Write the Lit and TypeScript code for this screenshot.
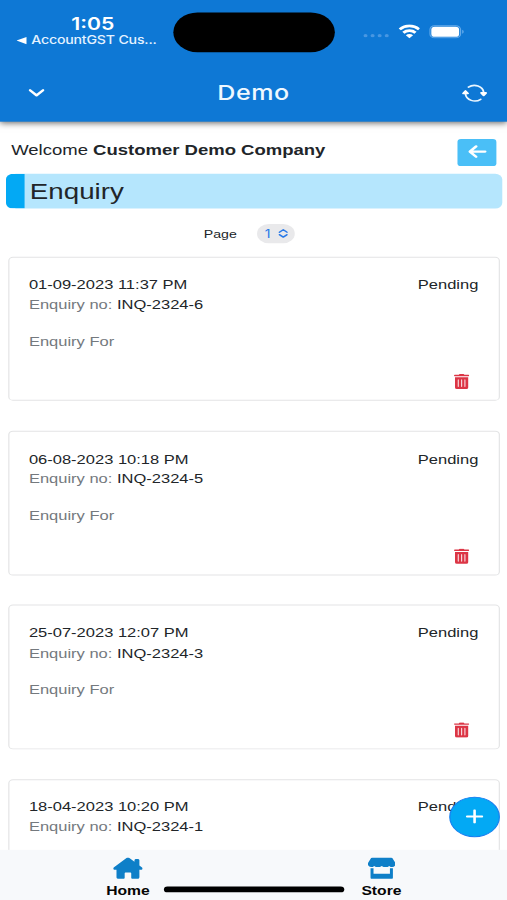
import { LitElement, html, css } from "lit";
import { customElement, property } from "lit/decorators.js";

interface Enquiry {
  date: string;
  no: string;
  status: string;
}

const ENQUIRIES: Enquiry[] = [
  { date: "01-09-2023 11:37 PM", no: "INQ-2324-6", status: "Pending" },
  { date: "06-08-2023 10:18 PM", no: "INQ-2324-5", status: "Pending" },
  { date: "25-07-2023 12:07 PM", no: "INQ-2324-3", status: "Pending" },
  { date: "18-04-2023 10:20 PM", no: "INQ-2324-1", status: "Pending" },
];

@customElement("enquiry-card")
export class EnquiryCard extends LitElement {
  @property({ attribute: false }) item!: Enquiry;

  static styles = css`
    :host {
      display: block;
      box-sizing: border-box;
      height: 149.3px;
      border: 1.3px solid #e3e4e5;
      border-radius: 4px;
      background: #fff;
      padding: 17.4px 17.3px 0 17px;
      font-size: 14px;
      line-height: 20.7px;
      color: #212529;
    }
    .row {
      display: flex;
      justify-content: space-between;
    }
    .muted {
      color: #74797e;
    }
    .for {
      margin-top: 17.4px;
    }
    .actions {
      display: flex;
      justify-content: flex-end;
      padding: 23.5px 7.4px 0 0;
    }
    .trash {
      width: 13px;
      height: 16px;
      display: block;
    }
  `;

  render() {
    return html`
      <div class="row"><span>${this.item.date}</span><span>${this.item.status}</span></div>
      <div><span class="muted">Enquiry no:</span> ${this.item.no}</div>
      <div class="muted for">Enquiry For</div>
      <div class="actions">
        <svg class="trash" viewBox="0 0 13 16" preserveAspectRatio="none">
          <path fill="#dc3545" d="M.9 3.600h11.200v10.600q0 1.600-1.600 1.600h-8Q.9 15.800.9 14.200zM.6 1.100h3.500L4.800.2h3.400l.7.900h3.500q.5 0 .5.500v.5q0 .4-.5.400H.6q-.5 0-.5-.4v-.5q0-.5.5-.5z" />
          <path stroke="#f8d5d9" stroke-width="1" stroke-linecap="round" d="M3.700 6.200v7M6.500 6.200v7M9.300 6.200v7" />
        </svg>
      </div>
    `;
  }
}

@customElement("app-root")
export class AppRoot extends LitElement {
  static styles = css`
    :host {
      display: block;
      width: 507px;
      height: 900px;
      overflow: hidden;
      background: #fff;
    }
    .device {
      position: relative;
      width: 430px;
      height: 932px;
      overflow: hidden;
      transform: scale(1.17907, 0.96567);
      transform-origin: 0 0;
      font-family: "Liberation Sans", Arial, sans-serif;
      color: #212529;
      background: #fff;
    }
    .header {
      position: relative;
      box-sizing: border-box;
      height: 126.3px;
      background: #0e78d5;
      box-shadow: 0 1px 6px rgba(0, 0, 0, 0.6);
      color: #fff;
      font-family: Inter, sans-serif;
    }
    .status {
      display: flex;
      justify-content: space-between;
      height: 66px;
      padding: 0 36px 0 14px;
    }
    .clock {
      display: flex;
      flex-direction: column;
      width: 130px;
      padding-top: 14.3px;
    }
    .time {
      font-size: 18px;
      font-weight: 600;
      line-height: 22px;
      padding-left: 46.5px;
    }
    .back {
      display: flex;
      align-items: center;
      gap: 4px;
      font-size: 12px;
      font-weight: 500;
      line-height: 12px;
      letter-spacing: -0.17px;
      white-space: nowrap;
      color: #e4f2ff;
    }
    .back svg {
      width: 8.5px;
      height: 8px;
    }
    .island {
      position: absolute;
      left: 147px;
      top: 13.3px;
      width: 137px;
      height: 40.5px;
      border-radius: 20.5px;
      background: #000;
    }
    .signals {
      display: flex;
      align-items: flex-start;
      padding-top: 25px;
    }
    .dots {
      width: 22px;
      height: 4px;
      margin: 10.3px 7.3px 0 0;
    }
    .wifi {
      width: 18.5px;
      height: 14.5px;
      margin-right: 8px;
    }
    .battery {
      width: 30px;
      height: 14px;
      margin-top: 0.9px;
    }
    .nav {
      display: grid;
      grid-template-columns: 1fr auto 1fr;
      align-items: center;
      height: 61px;
      padding: 0 17px 0 24.3px;
    }
    .title {
      font-size: 21.3px;
      font-weight: 500;
      letter-spacing: 0.4px;
      color: #eff8ff;
      margin-left: -7.3px;
      margin-top: -1px;
    }
    .chev {
      width: 14px;
      height: 9px;
    }
    .sync {
      width: 21px;
      height: 19px;
      justify-self: end;
    }
    .welcome {
      display: flex;
      justify-content: space-between;
      align-items: flex-start;
      padding: 17.4px 9px 0 9.5px;
      height: 36.7px;
      font-size: 15.7px;
    }
    .welcome-text {
      line-height: 22px;
      padding-top: 0.6px;
      white-space: nowrap;
    }
    .back-btn {
      display: flex;
      align-items: center;
      justify-content: center;
      width: 33px;
      height: 28px;
      border-radius: 3px;
      background: #4abff7;
    }
    .back-btn svg {
      width: 16px;
      height: 14px;
      margin-top: -1.5px;
    }
    .heading {
      display: flex;
      align-items: center;
      box-sizing: border-box;
      height: 36px;
      margin: 0 4.5px 0 5px;
      border-left: 16.6px solid #03a9f4;
      border-radius: 6px;
      background: #b5e6fd;
      padding: 1px 0 0 4.3px;
      font-size: 23.5px;
      line-height: 35px;
    }
    .pager {
      display: flex;
      align-items: center;
      justify-content: center;
      gap: 17.3px;
      height: 49.7px;
      padding-right: 7px;
      padding-top: 1px;
      box-sizing: border-box;
      font-size: 12px;
    }
    .select {
      display: flex;
      align-items: center;
      box-sizing: border-box;
      width: 32px;
      height: 20px;
      border-radius: 10px;
      background: #e9e9eb;
      color: #2879e8;
      font-family: Inter, sans-serif;
      font-size: 12px;
      padding-left: 6.3px;
      gap: 6.5px;
    }
    .select svg {
      width: 8.5px;
      height: 9.5px;
      margin-top: 1px;
    }
    .list {
      display: flex;
      flex-direction: column;
      gap: 30.9px;
      padding: 0 6px 0 6.5px;
    }
    .fab {
      position: absolute;
      left: 380.7px;
      top: 824.7px;
      box-sizing: border-box;
      width: 43.8px;
      height: 42.3px;
      border: 1.5px solid #187ff0;
      border-radius: 50%;
      background: #03a9f4;
      display: flex;
      align-items: center;
      justify-content: center;
    }
    .fab svg {
      width: 15px;
      height: 15px;
      margin-top: -1.5px;
    }
    .tabs {
      position: absolute;
      left: 0;
      right: 0;
      bottom: 0;
      height: 52px;
      display: grid;
      grid-template-columns: 1fr 1fr;
      background: #f7f9fb;
    }
    .tab {
      display: flex;
      flex-direction: column;
      align-items: center;
      padding: 7.7px 0 0 2px;
      font-size: 13.3px;
      font-weight: 700;
      line-height: 16px;
      color: #050505;
    }
    .tab svg {
      width: 25px;
      height: 22.7px;
      margin-bottom: 4.3px;
    }
    .tab svg.store {
      width: 23.5px;
    }
    .indicator {
      position: absolute;
      left: 139px;
      bottom: 8.5px;
      width: 153px;
      height: 5.5px;
      border-radius: 3px;
      background: #000;
    }
  `;

  render() {
    return html`
      <div class="device">
        <div class="header">
          <div class="status">
            <div class="clock">
              <div class="time">1:05</div>
              <div class="back">
                <svg viewBox="0 0 9 8"><path d="M0 4 9 0v8z" fill="#fff" /></svg>
                <span>AccountGST Cus...</span>
              </div>
            </div>
            <div class="signals">
              <svg class="dots" viewBox="0 0 22 4" fill="#4897e2">
                <circle cx="2" cy="2" r="1.7" /><circle cx="8" cy="2" r="1.7" />
                <circle cx="14" cy="2" r="1.7" /><circle cx="20" cy="2" r="1.7" />
              </svg>
              <svg class="wifi" viewBox="0 0 18 14" preserveAspectRatio="none" fill="none" stroke="#fff" stroke-width="2.6">
                <path d="M1 5.200C5.600.600 12.400.600 17 5.200M4 8.600c2.900-2.800 7.100-2.800 10 0" />
                <path d="M9 14 6 11c1.700-1.600 4.300-1.600 6 0z" fill="#fff" stroke="none" />
              </svg>
              <svg class="battery" viewBox="0 0 30 14">
                <rect x=".6" y=".6" width="26" height="12.6" rx="4" fill="none" stroke="#65abea" />
                <rect x="1.800" y="1.700" width="23.600" height="10.400" rx="3" fill="#fff" />
                <path d="M28 4.800c1.700.8 1.700 3.400 0 4.200z" fill="#65abea" />
              </svg>
            </div>
          </div>
          <div class="nav">
            <svg class="chev" viewBox="0 0 14 9" fill="none" stroke="#fff" stroke-width="2.3" stroke-linecap="round" stroke-linejoin="round">
              <path d="M1.500 1.500 7 6.800l5.500-5.300" />
            </svg>
            <span class="title">Demo</span>
            <svg class="sync" viewBox="0 0 21 19" fill="none" stroke="#eaf6ff" stroke-width="1.6" stroke-linecap="round">
              <path d="M5.300 3.200C10.200-.6 17.600 2 18.300 9M15.700 15.800C10.800 19.600 3.400 17 2.700 10" />
              <path d="M16.100 9.200h4.200L18.200 11.800zM.7 9.800h4.200L2.800 7.200z" fill="#fff" stroke="#fff" stroke-linejoin="round" stroke-width="1.700" />
            </svg>
          </div>
          <div class="island"></div>
        </div>

        <div class="welcome">
          <span class="welcome-text">Welcome <b>Customer Demo Company</b></span>
          <span class="back-btn">
            <svg viewBox="0 0 16 14" fill="none" stroke="#fff" stroke-width="2.3" stroke-linecap="round" stroke-linejoin="round">
              <path d="M14.500 7H2M6.800 1.600 1.500 7l5.300 5.400" />
            </svg>
          </span>
        </div>
        <div class="heading">Enquiry</div>
        <div class="pager">
          <span>Page</span>
          <span class="select">
            1
            <svg viewBox="0 0 9 10" fill="none" stroke="#2879e8" stroke-width="1.5" stroke-linecap="round" stroke-linejoin="round">
              <path d="M1 3.700 4.500 1 8 3.700M1 6.300 4.500 9 8 6.300" />
            </svg>
          </span>
        </div>
        <div class="list">${ENQUIRIES.map((e) => html`<enquiry-card .item=${e}></enquiry-card>`)}</div>

        <div class="tabs">
          <div class="tab">
            <svg viewBox="0 0 576 512" preserveAspectRatio="none" fill="#0e7fc8">
              <path
                d="M575.800 255.500c0 18-15 32.100-32 32.100h-32l.7 160.200c0 35-20 64.200-48 64.200h-72c-22 0-40-18-40-40V376c0-14-8-24-24-24h-80c-16 0-24 10-24 24v96c0 22-18 40-40 40h-64c-30 0-56-20-56-56V287.600H32c-18 0-32-14-32-32.100 0-9 3-17 10-24L266.400 8c7-7 15-8 22-8s15 2 21 7L416 100V64c0-18 14-32 32-32h32c18 0 32 14 32 32v121l52 46.500c8 7 12 15 11.800 24z"
              />
            </svg>
            Home
          </div>
          <div class="tab">
            <svg class="store" viewBox="0 0 26 22" preserveAspectRatio="none" fill="#0e7fc8">
              <path d="M4.300 0h17.400q.9 0 1.400.8L25.600 5q.8 1.700-.2 3.300-1 1.300-2.600 1.300-1.600 0-2.700-1.200-1.400 1.200-3.500 1.200-2.100 0-3.600-1.200-1.500 1.200-3.600 1.200-2.100 0-3.500-1.200-1.100 1.200-2.700 1.200Q1.600 9.600.6 8.300-.4 6.700.4 5L2.900.8Q3.400 0 4.300 0z" />
              <path d="M2.500 10.700h2.800v5.700h15.400v-5.700h2.800V20q0 2-2 2h-17q-2 0-2-2z" />
            </svg>
            Store
          </div>
        </div>
        <div class="indicator"></div>
        <div class="fab">
          <svg viewBox="0 0 15 15" stroke="#fff" stroke-width="2.2" stroke-linecap="round"><path d="M7.500 1.200v12.600M1.200 7.500h12.600" /></svg>
        </div>
      </div>
    `;
  }
}
